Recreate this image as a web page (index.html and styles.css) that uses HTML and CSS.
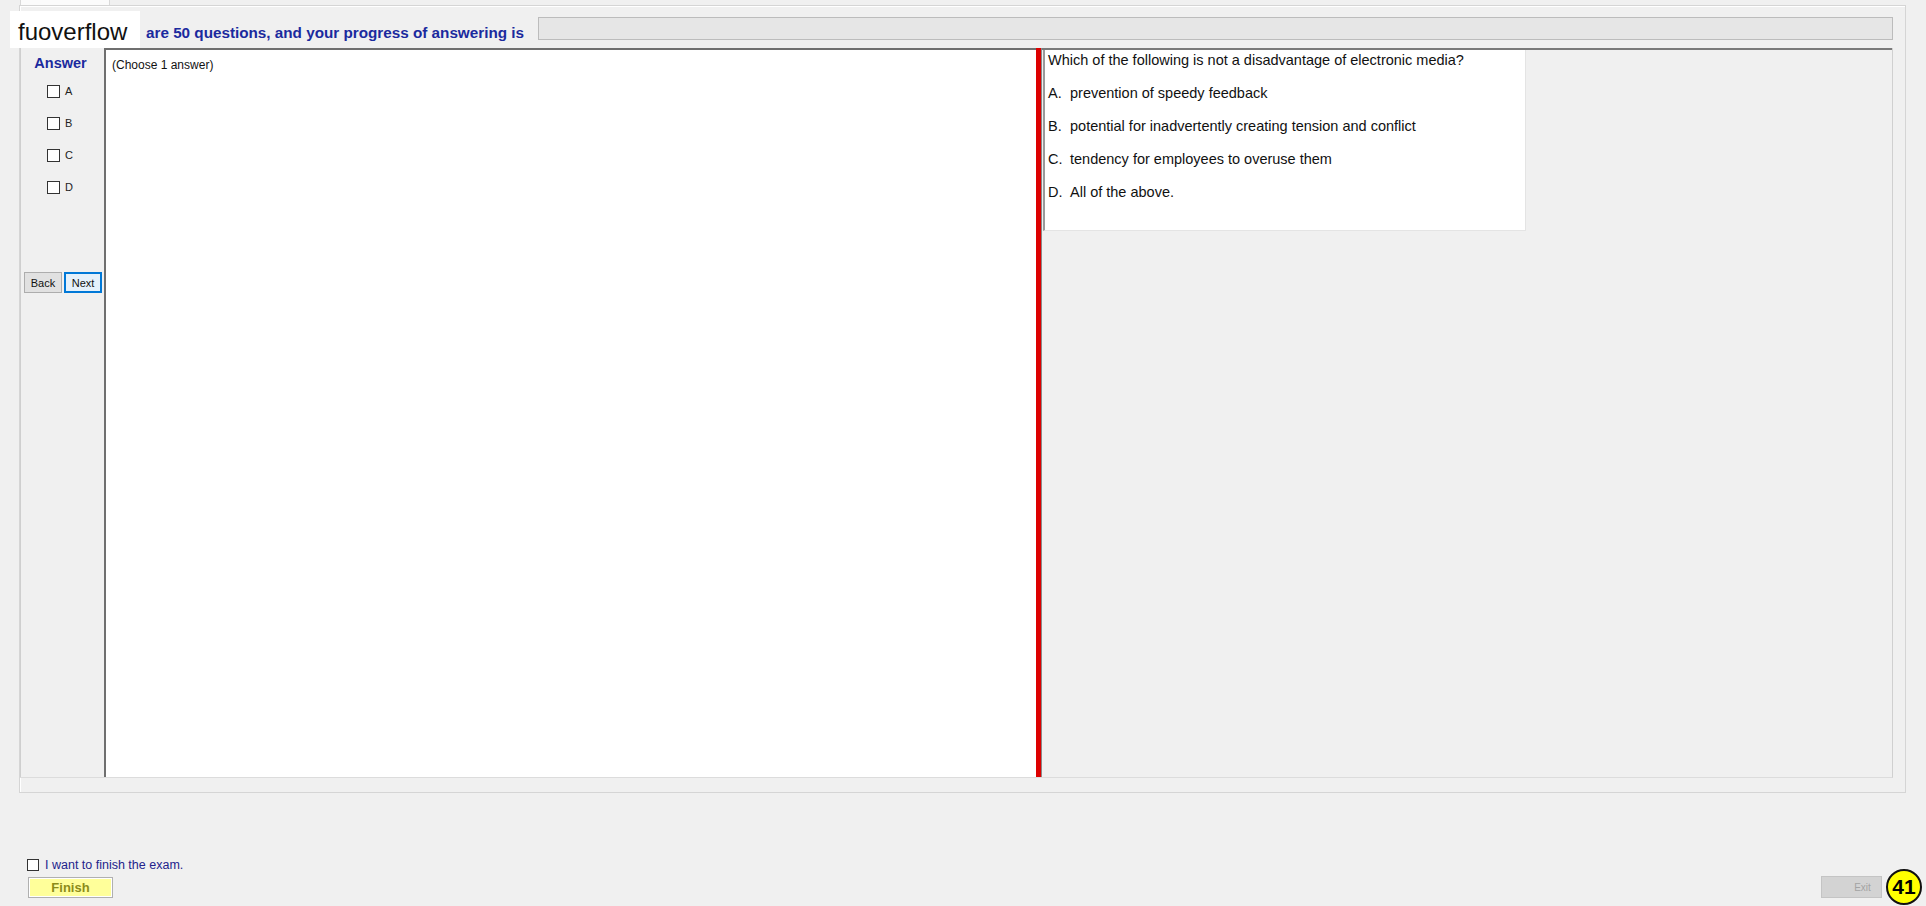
FILE: index.html
```html
<!DOCTYPE html>
<html lang="en">

<head>
  <meta charset="UTF-8">
  <meta name="viewport" content="width=device-width, initial-scale=1.0">
  <title>Exam</title>
  <link rel="stylesheet" href="styles.css">
</head>

<body>
  <div class="tabstrip">
    <div class="tab"></div>
  </div>

  <div class="logo">fuoverflow</div>

  <div class="tabpage">
    <div class="head">
      <span class="head-text">are 50 questions, and your progress of answering is</span>
      <div class="progress"></div>
    </div>

    <div class="inner">
      <div class="answers">
        <div class="answers-title">Answer</div>
        <div class="opt"><span class="cb"></span><span class="opt-label">A</span></div>
        <div class="opt"><span class="cb"></span><span class="opt-label">B</span></div>
        <div class="opt"><span class="cb"></span><span class="opt-label">C</span></div>
        <div class="opt"><span class="cb"></span><span class="opt-label">D</span></div>
        <div class="nav">
          <button class="btn">Back</button>
          <button class="btn btn-focus">Next</button>
        </div>
      </div>

      <div class="work">
        <span class="hint">(Choose 1 answer)</span>
      </div>

      <div class="splitter"></div>

      <div class="qside">
        <div class="qbox">
          <p>Which of the following is not a disadvantage of electronic media?</p>
          <p><span class="letter">A.</span>prevention of speedy feedback</p>
          <p><span class="letter">B.</span>potential for inadvertently creating tension and conflict</p>
          <p><span class="letter">C.</span>tendency for employees to overuse them</p>
          <p><span class="letter">D.</span>All of the above.</p>
        </div>
      </div>
    </div>
  </div>

  <div class="footer">
    <div class="finish-col">
      <div class="finish-check">
        <span class="cb"></span>
        <span class="finish-text">I want to finish the exam.</span>
      </div>
      <button class="finish-btn">Finish</button>
    </div>
    <div class="exit-col">
      <button class="exit-btn">Exit</button>
      <div class="badge">41</div>
    </div>
  </div>
</body>

</html>
```

FILE: styles.css
```css
p {
  padding: 0;
  margin: 0;
}

body {
  margin: 0;
  width: 1926px;
  height: 906px;
  overflow: hidden;
  position: relative;
  background: #f0f0f0;
  font-family: "Liberation Sans", Arial, sans-serif;
  color: #111;
}

button {
  font-family: "Liberation Sans", Arial, sans-serif;
  padding: 0;
  cursor: pointer;
}

.tabstrip {
  height: 5px;
}

.tab {
  margin-left: 20px;
  width: 90px;
  height: 5px;
  box-sizing: border-box;
  background: #fbfbfb;
  border-left: 1px solid #d9d9d9;
  border-right: 1px solid #d9d9d9;
}

.logo {
  position: absolute;
  top: 11px;
  left: 10px;
  width: 130px;
  height: 37px;
  box-sizing: border-box;
  padding: 8px 0 0 8px;
  background: #fff;
  font-size: 24px;
  line-height: 26px;
  color: #111;
}

.tabpage {
  margin: 0 20px 0 19px;
  height: 788px;
  box-sizing: border-box;
  border: 1px solid #d5d5d5;
  box-shadow: inset 1px 1px 0 #fff;
}

.head {
  display: flex;
  align-items: center;
  padding: 11px 12px 8px 126px;
}

.head-text {
  padding-top: 4px;
  margin-bottom: -4px;
  font-size: 15.25px;
  font-weight: bold;
  line-height: 23px;
  color: #1b2a9e;
  white-space: nowrap;
}

.progress {
  flex: 1;
  margin-left: 14px;
  height: 23px;
  box-sizing: border-box;
  border: 1px solid #bcbcbc;
  background: #e6e6e6;
}

.inner {
  display: flex;
  margin-right: 12px;
  height: 730px;
  box-sizing: border-box;
  border-right: 1px solid #d0d0d0;
  border-bottom: 1px solid #dcdcdc;
}

.answers {
  width: 84px;
  box-sizing: border-box;
  border-left: 1px solid #cfcfcf;
  display: flex;
  flex-direction: column;
}

.answers-title {
  padding: 6px 4px 0 0;
  margin-bottom: 3px;
  text-align: center;
  font-size: 14.5px;
  font-weight: bold;
  line-height: 18px;
  color: #1b2a9e;
}

.opt {
  height: 32px;
  display: flex;
  align-items: center;
  padding-left: 26px;
}

.cb {
  display: inline-block;
  width: 13px;
  height: 13px;
  box-sizing: border-box;
  border: 1px solid #333;
  background: #fff;
}

.opt-label {
  margin-left: 5px;
  font-size: 11px;
  color: #222;
}

.nav {
  margin-top: 69px;
  padding-left: 3px;
  display: flex;
  gap: 2px;
}

.btn {
  width: 38px;
  height: 21px;
  box-sizing: border-box;
  border: 1px solid #adadad;
  background: #e1e1e1;
  font-size: 11px;
  color: #111;
}

.btn-focus {
  border: 2px solid #0078d7;
  background: #e5f1fb;
}

.work {
  width: 932px;
  box-sizing: border-box;
  background: #fff;
  border-left: 2px solid #6f6f6f;
  border-top: 2px solid #6f6f6f;
  padding: 5px 0 0 6px;
}

.hint {
  font-size: 12px;
  line-height: 14px;
  color: #111;
}

.splitter {
  width: 5px;
  background: #dd0000;
  border-right: 1px solid #8a8a8a;
}

.qside {
  flex: 1;
  border-top: 2px solid #7a7a7a;
  background: #f0f0f0;
}

.qbox {
  margin-left: 1px;
  width: 483px;
  height: 181px;
  box-sizing: border-box;
  background: #fff;
  border-left: 2px solid #9a9a9a;
  border-right: 1px solid #e4e4e4;
  border-bottom: 1px solid #e4e4e4;
  padding: 1px 0 0 3px;
  font-size: 14.5px;
  line-height: 18px;
  color: #111;
}

.qbox p {
  margin-bottom: 15px;
  white-space: nowrap;
}

.letter {
  display: inline-block;
  width: 22px;
}

.footer {
  display: flex;
  padding: 65px 4px 0 27px;
}

.finish-col {
  display: flex;
  flex-direction: column;
}

.finish-check {
  display: flex;
  align-items: center;
  height: 13px;
}

.finish-check .cb {
  width: 12px;
  height: 12px;
}

.finish-text {
  margin-left: 6px;
  font-size: 12.5px;
  color: #23238c;
}

.finish-btn {
  margin: 6px 0 0 1px;
  width: 85px;
  height: 21px;
  box-sizing: border-box;
  border: 1px solid #b0b0b0;
  box-shadow: inset 0 0 0 1px #fff;
  background: #ffff9a;
  font-size: 13px;
  font-weight: bold;
  color: #8c8c1a;
}

.exit-col {
  margin-left: auto;
  margin-top: 11px;
  display: flex;
  align-items: center;
  gap: 4px;
}

.exit-btn {
  width: 61px;
  height: 22px;
  box-sizing: border-box;
  border: 1px solid #c4c4c4;
  background: #d3d3d3;
  padding-left: 22px;
  font-size: 10px;
  color: #a3a3a3;
}

.badge {
  width: 36px;
  height: 36px;
  box-sizing: border-box;
  border: 2px solid #111;
  border-radius: 50%;
  background: #ffff00;
  display: flex;
  align-items: center;
  justify-content: center;
  font-size: 21px;
  font-weight: bold;
  color: #000;
}
```
